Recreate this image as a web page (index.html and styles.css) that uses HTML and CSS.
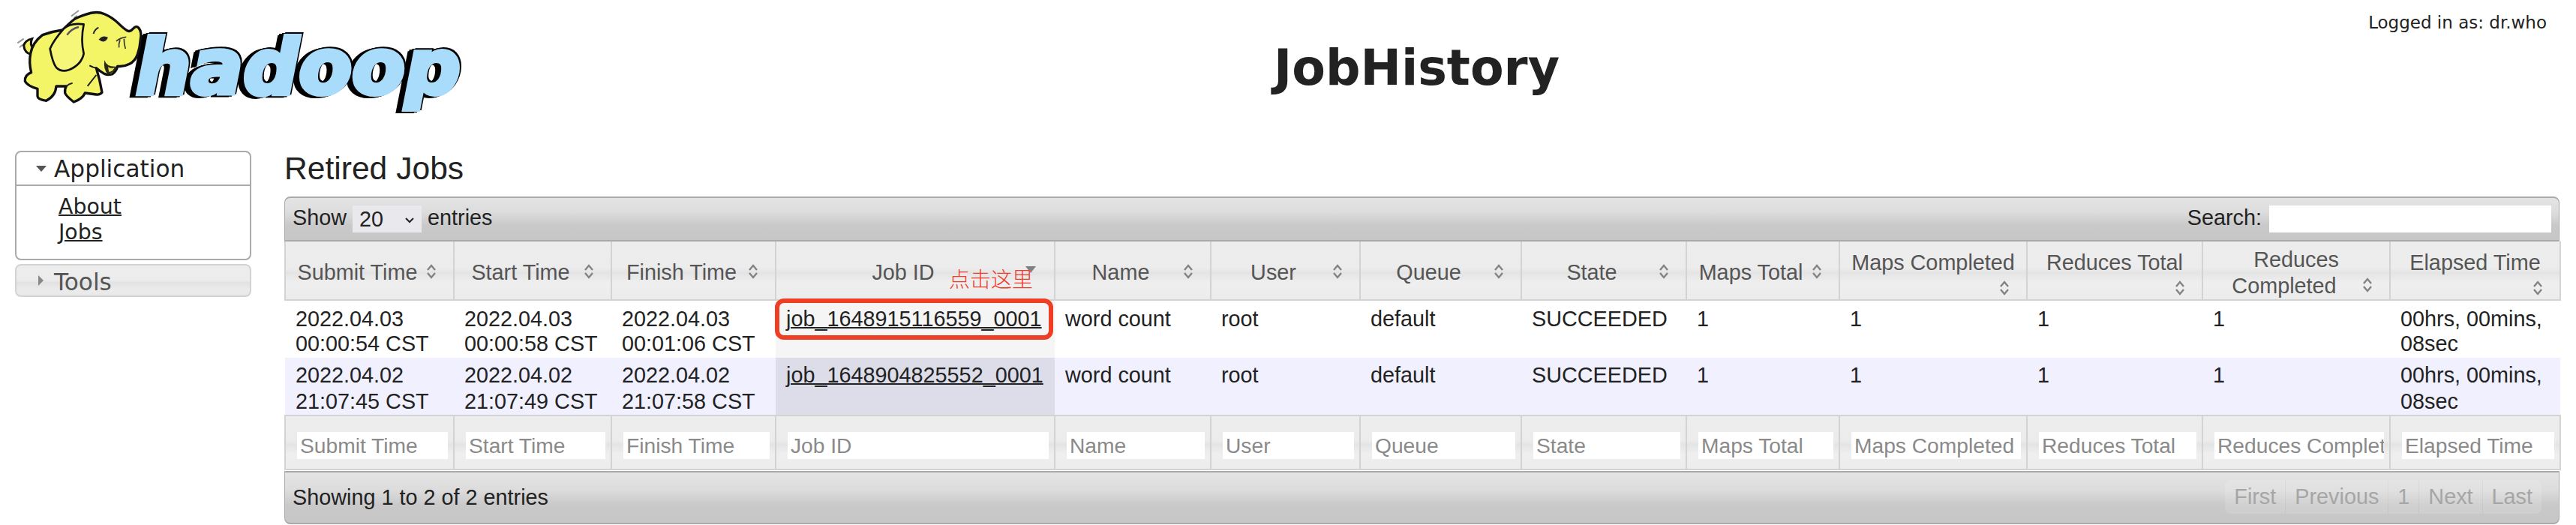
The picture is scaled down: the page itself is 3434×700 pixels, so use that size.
FILE: index.html
```html
<!DOCTYPE html>
<html>
<head>
<meta charset="utf-8">
<title>JobHistory</title>
<link rel="stylesheet" href="styles.css">
</head>
<body>

<svg width="0" height="0" class="defs">
  <symbol id="sort-both" viewBox="0 0 16 22">
    <path d="M3 9 L8 3 L13 9" fill="none" stroke="#828282" stroke-width="2.4"/>
    <path d="M3 13 L8 19 L13 13" fill="none" stroke="#828282" stroke-width="2.4"/>
  </symbol>
</svg>

<header class="top">
  <svg class="logo" width="620" height="155" viewBox="0 0 620 155">
    <!-- wordmark, real text with a heavy shadow to the left -->
    <text class="wordmark" x="181" y="125" textLength="433" lengthAdjust="spacingAndGlyphs">hadoop</text>
    <!-- elephant, traced at 3x -->
    <g transform="scale(0.3333)">
      <path d="M70 172 L95 155 M78 190 L92 178 M285 65 L315 42 M296 72 L308 62" stroke="#9a9a9a" stroke-width="6" fill="none"/>
      <path d="M132 192 Q118 178 128 155 Q100 162 95 182 Q98 212 125 218 Z" fill="#f0ef62" stroke="#111" stroke-width="9"/>
      <path d="M342 58 Q385 42 418 56 Q450 70 472 92 Q495 115 508 122 Q520 130 532 115 Q545 100 555 112 Q568 128 562 158 Q560 190 550 218 Q540 245 518 256 Q495 268 470 265 Q466 285 448 297 Q430 302 417 295 Q400 285 385 272 Q400 320 408 370 Q400 380 385 378 L340 372 Q330 395 295 408 Q265 385 260 372 Q258 355 265 345 L225 345 Q222 385 185 403 Q150 398 150 385 L150 355 Q110 345 100 325 Q98 300 125 290 Q115 250 122 215 Q130 170 170 140 Q210 125 250 120 Q280 90 300 75 Q320 65 342 58 Z" fill="#f4f566" stroke="#111" stroke-width="10" stroke-linejoin="round"/>
      <path d="M335 97 Q280 90 255 115 Q215 160 200 195 Q210 250 225 270 Q245 290 275 280 Q325 260 335 215 Q322 160 335 97 Z" fill="#f6f778" stroke="#111" stroke-width="8" stroke-linejoin="round"/>
      <path d="M268 140 Q285 115 315 108" stroke="#555" stroke-width="7" fill="none"/>
      <path d="M395 158 Q412 138 432 150 Q420 178 395 158 Z" fill="#222"/>
      <path d="M374 135 Q378 118 394 110" stroke="#222" stroke-width="6" fill="none"/>
      <path d="M465 165 Q482 150 505 148 M480 160 Q474 175 476 190 M496 155 Q496 178 502 195" stroke="#333" stroke-width="5" fill="none"/>
      <path d="M418 240 Q425 268 465 266 Q462 290 432 296 Q412 280 418 240 Z" fill="#2a2a1a"/>
      <path d="M432 268 Q445 276 458 270 Q452 286 436 288 Z" fill="#e8e050"/>
      <path d="M358 262 Q372 270 385 272" stroke="#111" stroke-width="6" fill="none"/>
      <path d="M385 300 L350 345 M265 345 Q275 335 290 332" stroke="#222" stroke-width="6" fill="none"/>
    </g>
  </svg>
  <h1 class="title">JobHistory</h1>
  <div class="logged">Logged in as: dr.who</div>
</header>

<div class="main">
  <nav class="nav">
    <div class="acc-open">
      <div class="acc-head"><span class="tri-down"></span>Application</div>
      <ul class="acc-body">
        <li><a href="#">About</a></li>
        <li><a href="#">Jobs</a></li>
      </ul>
    </div>
    <div class="acc-closed"><span class="tri-right"></span>Tools</div>
  </nav>

  <section class="content">
    <h2 class="heading">Retired Jobs</h2>
    <div class="bar bar-top">
      <div class="length">Show <span class="select-wrap"><select class="length-select"><option>20</option></select><svg class="select-arrow" width="14" height="9" viewBox="0 0 14 9"><path d="M2 2 L7 7 L12 2" fill="none" stroke="#222" stroke-width="2"/></svg></span> entries</div>
      <div class="search">Search: <input class="search-input" type="text"></div>
    </div>
    <table class="jobs">
      <colgroup>
        <col class="c1"><col class="c2"><col class="c3"><col class="c4"><col class="c5"><col class="c6"><col class="c7"><col class="c8"><col class="c9"><col class="c10"><col class="c11"><col class="c12"><col class="c13">
      </colgroup>
      <thead>
        <tr>
          <th>Submit Time<svg class="sort"><use href="#sort-both"/></svg></th>
          <th>Start Time<svg class="sort"><use href="#sort-both"/></svg></th>
          <th>Finish Time<svg class="sort"><use href="#sort-both"/></svg></th>
          <th>Job ID<span class="sort-desc"></span></th>
          <th>Name<svg class="sort"><use href="#sort-both"/></svg></th>
          <th>User<svg class="sort"><use href="#sort-both"/></svg></th>
          <th>Queue<svg class="sort"><use href="#sort-both"/></svg></th>
          <th>State<svg class="sort"><use href="#sort-both"/></svg></th>
          <th>Maps Total<svg class="sort"><use href="#sort-both"/></svg></th>
          <th>Maps Completed<svg class="sort"><use href="#sort-both"/></svg></th>
          <th>Reduces Total<svg class="sort"><use href="#sort-both"/></svg></th>
          <th>Reduces Completed<svg class="sort"><use href="#sort-both"/></svg></th>
          <th>Elapsed Time<svg class="sort"><use href="#sort-both"/></svg></th>
        </tr>
      </thead>
      <tbody>
        <tr class="odd">
          <td>2022.04.03 00:00:54 CST</td>
          <td>2022.04.03 00:00:58 CST</td>
          <td>2022.04.03 00:01:06 CST</td>
          <td class="sorted marked">
            <a href="#">job_1648915116559_0001</a>
            <span class="red-box"></span>
            <span class="red-note">点击这里</span>
          </td>
          <td>word count</td>
          <td>root</td>
          <td>default</td>
          <td>SUCCEEDED</td>
          <td>1</td>
          <td>1</td>
          <td>1</td>
          <td>1</td>
          <td>00hrs, 00mins, 08sec</td>
        </tr>
        <tr class="even">
          <td>2022.04.02 21:07:45 CST</td>
          <td>2022.04.02 21:07:49 CST</td>
          <td>2022.04.02 21:07:58 CST</td>
          <td class="sorted"><a href="#">job_1648904825552_0001</a></td>
          <td>word count</td>
          <td>root</td>
          <td>default</td>
          <td>SUCCEEDED</td>
          <td>1</td>
          <td>1</td>
          <td>1</td>
          <td>1</td>
          <td>00hrs, 00mins, 08sec</td>
        </tr>
      </tbody>
      <tfoot>
        <tr>
          <th><input type="text" placeholder="Submit Time"></th>
          <th><input type="text" placeholder="Start Time"></th>
          <th><input type="text" placeholder="Finish Time"></th>
          <th><input type="text" placeholder="Job ID"></th>
          <th><input type="text" placeholder="Name"></th>
          <th><input type="text" placeholder="User"></th>
          <th><input type="text" placeholder="Queue"></th>
          <th><input type="text" placeholder="State"></th>
          <th><input type="text" placeholder="Maps Total"></th>
          <th><input type="text" placeholder="Maps Completed"></th>
          <th><input type="text" placeholder="Reduces Total"></th>
          <th><input type="text" placeholder="Reduces Completed"></th>
          <th><input type="text" placeholder="Elapsed Time"></th>
        </tr>
      </tfoot>
    </table>
    <div class="bar bar-bottom">
      <div class="info">Showing 1 to 2 of 2 entries</div>
      <div class="pager">
        <span class="page-btn">First</span><span class="page-btn">Previous</span><span class="page-btn">1</span><span class="page-btn">Next</span><span class="page-btn">Last</span>
      </div>
    </div>
  </section>
</div>

</body>
</html>
```

FILE: styles.css
```css
html, body {
  margin: 0;
  padding: 0;
  background: #fff;
}
body {
  font-family: "Liberation Sans", Arial, sans-serif;
  font-size: 28.8px;
  color: #222;
  width: 3434px;
  height: 700px;
  overflow: hidden;
}
.defs {
  position: absolute;
}

/* header */
.top {
  display: flex;
  height: 190px;
  box-sizing: border-box;
  padding: 0 39px 0 0;
  justify-content: space-between;
  align-items: flex-start;
}
.logo {
  display: block;
  flex: none;
}
.wordmark {
  font-family: "DejaVu Sans", sans-serif;
  font-weight: bold;
  font-style: italic;
  font-size: 102px;
  fill: #a9dcfb;
  stroke: #a9dcfb;
  stroke-width: 6px;
  filter: drop-shadow(-4px 1px 0 #000) drop-shadow(-4px 1px 0 #000) drop-shadow(2px -2px 0 #000);
}
.title {
  margin: 53px 0 0 0;
  font-family: "DejaVu Sans", sans-serif;
  font-weight: bold;
  font-size: 65px;
  line-height: 76px;
  color: #222;
}
.logged {
  font-family: "DejaVu Sans", sans-serif;
  font-size: 23px;
  line-height: 30px;
  margin-top: 15px;
  color: #222;
}

/* page body */
.main {
  display: flex;
  align-items: flex-start;
  padding: 11px 22px 0 20px;
}
.nav {
  width: 315px;
  flex: none;
  margin-right: 44px;
  font-family: "DejaVu Sans", sans-serif;
}
.acc-open {
  border: 2px solid #aaa;
  border-radius: 8px;
  height: 146px;
  box-sizing: border-box;
}
.acc-head {
  height: 43px;
  line-height: 44px;
  font-size: 31.2px;
  border-bottom: 2px solid #aaa;
  padding-left: 50px;
  position: relative;
}
.tri-down {
  position: absolute;
  left: 26px;
  top: 18px;
  border-left: 7px solid transparent;
  border-right: 7px solid transparent;
  border-top: 8px solid #555;
}
.acc-body {
  list-style: none;
  margin: 0;
  padding: 11px 0 0 56px;
  font-size: 28.4px;
  line-height: 34px;
}
.acc-body a {
  color: #222;
  text-decoration-thickness: 2px;
}
.acc-closed {
  margin-top: 5px;
  height: 44px;
  line-height: 44px;
  box-sizing: border-box;
  border: 2px solid #d3d3d3;
  border-radius: 8px;
  font-size: 31.2px;
  color: #555;
  padding-left: 50px;
  position: relative;
  background: linear-gradient(#ededed 0, #ececec 48%, #e2e2e2 58%, #ebebeb 80%, #e8e8e8 100%);
}
.tri-right {
  position: absolute;
  left: 29px;
  top: 13px;
  border-top: 7px solid transparent;
  border-bottom: 7px solid transparent;
  border-left: 7px solid #888;
}
.content {
  width: 3033px;
  flex: none;
}
.heading {
  margin: 0;
  font-weight: normal;
  font-size: 42.6px;
  line-height: 46px;
  height: 61px;
  color: #222;
}

/* toolbars */
.bar {
  display: flex;
  justify-content: space-between;
  align-items: center;
  box-sizing: border-box;
  background: linear-gradient(#e4e4e4 0, #dcdcdc 35%, #c9c9c9 65%, #c6c6c6 100%);
  border-color: #aaa;
  border-style: solid;
  padding: 0 10px 0 10px;
  color: #222;
}
.bar-top {
  height: 60px;
  border-width: 2px 1px 2px 1px;
  border-radius: 8px 8px 0 0;
}
.bar-bottom {
  height: 71px;
  margin-top: 1px;
  border-width: 2px 1px 2px 1px;
  border-radius: 0 0 8px 8px;
  padding-right: 23px;
}
.select-wrap {
  position: relative;
  display: inline-block;
  vertical-align: middle;
}
.length-select {
  display: block;
  width: 92px;
  height: 36px;
  border: 0;
  appearance: none;
  background: #e9e9ed;
  font-family: "Liberation Sans", Arial, sans-serif;
  font-size: 28.8px;
  color: #222;
  margin: 0;
  padding: 0 0 0 9px;
}
.select-arrow {
  position: absolute;
  right: 9px;
  top: 15px;
}
.search-input {
  width: 376px;
  height: 36px;
  box-sizing: border-box;
  border: 0;
  background: #fff;
  padding: 0;
  margin-left: 2px;
  vertical-align: middle;
}

/* table */
.jobs {
  table-layout: fixed;
  border-collapse: collapse;
  width: 3033px;
}
.c1 { width: 225px; }
.c2 { width: 210px; }
.c3 { width: 219px; }
.c4 { width: 372px; }
.c5 { width: 208px; }
.c6 { width: 199px; }
.c7 { width: 215px; }
.c8 { width: 220px; }
.c9 { width: 204px; }
.c10 { width: 250px; }
.c11 { width: 234px; }
.c12 { width: 250px; }
.c13 { width: 227px; }

.jobs thead th {
  height: 78px;
  box-sizing: border-box;
  padding: 6px 15px 0;
  font-weight: normal;
  line-height: 35px;
  color: #555;
  text-align: center;
  border: 2px solid #d3d3d3;
  border-top: 0;
  background: linear-gradient(#ededed 0, #ececec 46%, #e4e4e4 54%, #efefef 72%, #ececec 100%);
}
.sort {
  float: right;
  width: 16px;
  height: 22px;
  margin: 5px 6px 0 10px;
}
.sort-desc {
  float: right;
  width: 0;
  height: 0;
  margin: 9px 9px 0 9px;
  border-left: 7px solid transparent;
  border-right: 7px solid transparent;
  border-top: 9px solid #808080;
}
.jobs td {
  box-sizing: border-box;
  padding: 6px 14px 0;
  line-height: 35px;
  vertical-align: top;
}
.odd td {
  padding-top: 8px;
  padding-bottom: 2px;
  line-height: 33px;
}
.even td {
  background: #f0f0ff;
}
.odd td.sorted {
  background: #f5f5f5;
}
.even td.sorted {
  background: #ddddea;
}
.jobs td a {
  color: #222;
  text-decoration-thickness: 2px;
}
.marked {
  position: relative;
}
.red-box {
  position: absolute;
  left: -1px;
  top: -3px;
  width: 371px;
  height: 55px;
  box-sizing: border-box;
  border: 6px solid #ee3f25;
  border-radius: 12px;
}
.red-note {
  position: absolute;
  left: 231px;
  top: -45px;
  font-family: "Noto Sans CJK SC", sans-serif;
  font-weight: 300;
  font-size: 28px;
  line-height: 30px;
  color: #f03a2a;
  white-space: nowrap;
}
.jobs tfoot th {
  height: 72px;
  box-sizing: border-box;
  padding: 8px 7px 0 15px;
  font-weight: normal;
  border: 2px solid #d3d3d3;
  background: linear-gradient(#ededed 0, #ececec 46%, #e4e4e4 54%, #efefef 72%, #ececec 100%);
}
.jobs tfoot input {
  display: block;
  width: 100%;
  height: 36px;
  box-sizing: border-box;
  border: 0;
  background: #fff;
  padding: 0 0 0 4px;
  font-family: "Liberation Sans", Arial, sans-serif;
  font-size: 28.2px;
}
.jobs tfoot input::placeholder {
  color: #8a8a8a;
  opacity: 1;
}

/* pager */
.pager {
  display: flex;
  height: 45px;
  background: rgba(255, 255, 255, 0.14);
  border-radius: 8px;
  color: #a6a6a6;
  margin-top: -2px;
}
.page-btn {
  box-sizing: border-box;
  line-height: 45px;
  padding: 0 12px;
  border-left: 1px solid rgba(0, 0, 0, 0.04);
}
.page-btn:first-child {
  border-left: 0;
}
```
